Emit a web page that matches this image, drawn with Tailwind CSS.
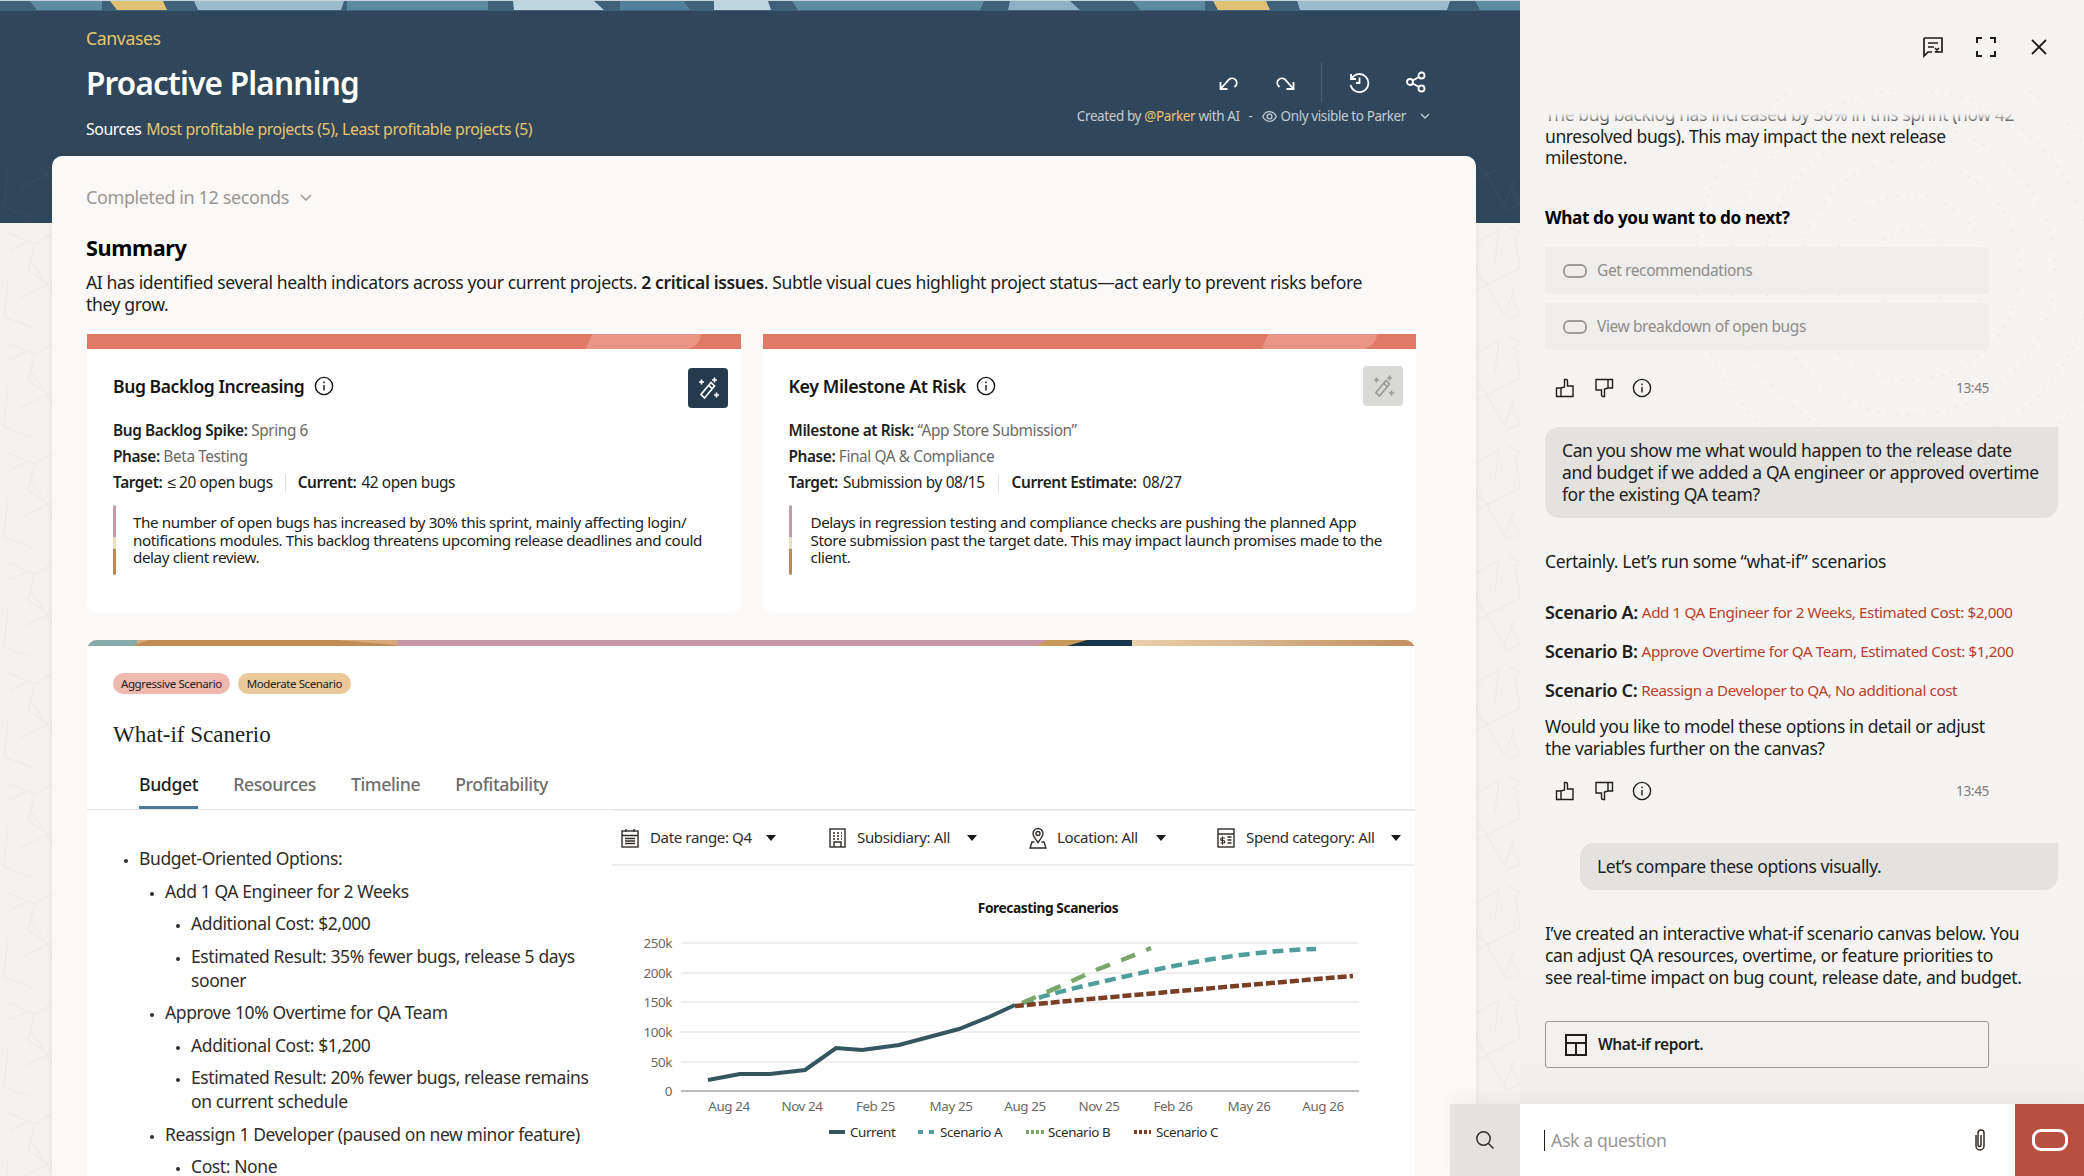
<!DOCTYPE html>
<html><head><meta charset="utf-8"><script src="https://cdn.jsdelivr.net/npm/@tailwindcss/browser@4"></script></head>
<body class="m-0">
<div class="relative flex w-[2084px] h-[1176px] overflow-hidden bg-[#f3f2ef] font-['Noto_Sans',sans-serif] tracking-[-0.4px] text-[#201e1c]">
<!-- LEFT -->
<div class="relative w-[1520px] shrink-0">
  <svg class="absolute left-0 top-0 pointer-events-none" width="1520" height="1176">
    <defs><pattern id="tex" width="120" height="110" patternUnits="userSpaceOnUse"><g stroke="#8a8a80" stroke-opacity=".07" stroke-width="1.300" fill="none"><path d="M5 12l30 12-7 26 20 14M35 24l24-14M59 10l-4 32M20 78l27-13 18 32M47 65l33-17 20 10M80 48l-5-32 27-9M100 58l-7 32-27 10M100 90l18 9M8 58l-4 39 27 10M68 6l40 20M94 38l20-12M30 40l14 20M74 70l-9 24M10 30l16-8M84 100l-12-20"/></g></pattern></defs>
    <rect x="0" y="170" width="1520" height="1006" fill="url(#tex)"/>
  </svg>
  <header class="h-[223px] bg-[#30475b] text-white">
    <svg class="block" width="1520" height="11" viewBox="0 0 1520 11">
      <rect width="1520" height="11" fill="#3f617a"/><rect width="1520" height="1" fill="#c7d3da"/>
      <polygon points="30,1 102,1 102,10 37,10" fill="#5f8ba4"/><polygon points="110,1 163,1 167,10 117,10" fill="#e0c072"/><polygon points="194,1 344,1 341,10 198,10" fill="#9bbccb"/><polygon points="347,1 488,1 488,10 347,10" fill="#5d8aa3"/><polygon points="513,1 594,1 604,10 514,10" fill="#bdd6e2"/><polygon points="620,1 684,1 690,10 620,10" fill="#527f9a"/><polygon points="714,1 768,1 771,10 714,10" fill="#bdd6e2"/><polygon points="792,1 984,1 980,10 798,10" fill="#5f8ca4"/><polygon points="1010,1 1070,1 1080,10 1008,10" fill="#8cb2c3"/><polygon points="1133,1 1205,1 1205,10 1140,10" fill="#5d8aa3"/><polygon points="1213,1 1266,1 1270,10 1218,10" fill="#e0c072"/><polygon points="1297,1 1450,1 1447,10 1300,10" fill="#9bbccb"/><polygon points="1475,1 1520,1 1520,10 1480,10" fill="#5f8ca4"/>
    </svg>
    <div class="flex justify-between pl-[86px] pr-[94px]">
      <div>
        <div class="mt-[16px] text-[17.700px] leading-[22px] text-[#e7c56f]">Canvases</div>
        <h1 class="mt-[13px] text-[31.500px] leading-[42px] tracking-[-0.8px] font-semibold text-white">Proactive Planning</h1>
        <p class="mt-[14px] text-[15.800px] leading-[22px]">Sources <span class="ml-[1px] text-[#e7c56f]">Most profitable projects (5), Least profitable projects (5)</span></p>
      </div>
      <div class="flex flex-col items-end">
        <div class="mt-[51px] flex items-center h-[40px] text-white">
          <svg class="mr-[36px]" width="22" height="22" viewBox="0 0 22 22" fill="none" stroke="currentColor" stroke-width="1.8"><path d="M3.5 11v7h7M3.500 18L12 8.500a4.600 4.600 0 0 1 6.500 6.500l-1 1"/></svg>
          <svg class="mr-[24px]" width="22" height="22" viewBox="0 0 22 22" fill="none" stroke="currentColor" stroke-width="1.8"><path d="M18.500 11v7h-7M18.500 18L10 8.500a4.600 4.600 0 0 0-6.500 6.500l1 1"/></svg>
          <div class="w-px h-[40px] bg-[#48606f] mr-[26px]"></div>
          <svg class="mr-[35px]" width="22" height="22" viewBox="0 0 22 22" fill="none" stroke="currentColor" stroke-width="1.8"><path d="M3 3v5h5M3.600 7.500A9 9 0 1 1 2.600 14M11.500 6.500V12H8"/></svg>
          <svg class="mr-[-1px]" width="22" height="22" viewBox="0 0 22 22" fill="none" stroke="currentColor" stroke-width="1.8"><circle cx="5" cy="11" r="3"/><circle cx="16.500" cy="4.500" r="3"/><circle cx="16.500" cy="17.500" r="3"/><path d="M7.700 9.500L14 6M7.700 12.500L14 16"/></svg>
        </div>
        <div class="mt-[4px] flex items-center h-[20px] text-[13.500px] text-[#c3ccd2] mr-[-5px]">
          <span>Created by <span class="text-[#e7c56f]">@Parker</span> with AI</span><span class="mx-[9px]">-</span>
          <svg class="mr-[4px]" width="15" height="15" viewBox="0 0 15 15" fill="none" stroke="currentColor" stroke-width="1.3"><path d="M.7 7.500C2.500 4 5 2.700 7.500 2.700S12.500 4 14.300 7.500c-1.800 3.500-4.300 4.800-6.800 4.800S2.500 11 .7 7.500z"/><circle cx="7.500" cy="7.500" r="2.400"/></svg>
          <span>Only visible to Parker</span>
          <svg class="ml-[13px]" width="12" height="12" viewBox="0 0 12 12" fill="none" stroke="currentColor" stroke-width="1.3"><path d="M2 4l4 4 4-4"/></svg>
        </div>
      </div>
    </div>
  </header>
  <main class="relative z-10 -mt-[67px] ml-[52px] w-[1424px] h-[1020px] bg-[#fbf9f7] rounded-t-[10px] shadow-[0_0_6px_rgba(0,0,0,0.08)] pl-[34px] pr-[60px] pt-[29px]">
    <div class="flex items-center h-[24px] text-[18px] text-[#9a9794]">Completed in 12 seconds
      <svg class="ml-[10px]" width="14" height="14" viewBox="0 0 14 14" fill="none" stroke="currentColor" stroke-width="1.5"><path d="M2 5l5 5 5-5"/></svg></div>
    <h2 class="mt-[24px] h-[30px] text-[21.700px] leading-[30px] font-bold text-black">Summary</h2>
    <p class="mt-[8px] text-[17.600px] leading-[22px] pr-[40px]">AI has identified several health indicators across your current projects. <b class="font-semibold">2 critical issues</b>. Subtle visual cues highlight project status—act early to prevent risks before they grow.</p>
    <div class="mt-[19px] grid grid-cols-2 gap-[22px] w-[1330px] pl-[1px]">
      <!-- card 1 -->
      <section class="h-[279px] bg-white rounded-b-[10px] overflow-hidden">
        <svg class="block" width="654" height="15"><rect width="654" height="15" fill="#e07a67"/><path d="M505 0H614Q614 10 602 15H499z" fill="#ea9585"/></svg>
        <div class="pl-[26px] pr-[13px]">
          <div class="flex justify-between items-start mt-[19px] h-[39px]">
            <div class="flex items-center h-[38px] text-[17.500px] font-semibold text-[#161513] mt-[-1px]">Bug Backlog Increasing
              <svg class="ml-[10px]" width="20" height="20" viewBox="0 0 20 20" fill="none" stroke="#161513" stroke-width="1.400"><circle cx="10" cy="10" r="8.600"/><path d="M10 9v5.500M10 5.400v1.800"/></svg></div>
            <div class="w-[40px] h-[40px] rounded-[4px] bg-[#253a4c] flex items-center justify-center text-white">
              <svg width="28" height="28" viewBox="0 0 28 28" fill="none" stroke="currentColor" stroke-width="1.700"><path d="M5 8h5M7.500 5.500v5M18 6h5M20.500 3.500v5M20 21h5M22.500 18.500v5"/><path d="M17 8.500l3.500 3.500L10.500 24 7 20.500zM14.500 11l3.500 3.500"/></svg></div>
          </div>
          <div class="mt-[11px] text-[15.400px] leading-[26px]">
            <div><b class="font-semibold">Bug Backlog Spike:</b> <span class="text-[#6b6966]">Spring 6</span></div>
            <div><b class="font-semibold">Phase:</b> <span class="text-[#6b6966]">Beta Testing</span></div>
            <div class="flex items-center"><b class="font-semibold">Target:</b><span class="ml-[5px]">≤ 20 open bugs</span><span class="w-px h-[18px] bg-[#e2e1de] mx-[12px]"></span><b class="font-semibold">Current:</b><span class="ml-[5px]">42 open bugs</span></div>
          </div>
          <div class="mt-[9px] flex h-[70px]">
            <div class="w-[3px] h-[70px] rounded-[2px] bg-[linear-gradient(#c79aa8_0%,#c79aa8_45%,#f0e0c0_46%,#f0e0c0_62%,#b88a56_63%,#b88a56_100%)]"></div>
            <p class="ml-[17px] mt-[9px] text-[15.200px] leading-[17.500px] w-[590px]">The number of open bugs has increased by 30% this sprint, mainly affecting login/ notifications modules. This backlog threatens upcoming release deadlines and could delay client review.</p>
          </div>
        </div>
      </section>
      <!-- card 2 -->
      <section class="h-[279px] bg-white rounded-b-[10px] overflow-hidden">
        <svg class="block" width="654" height="15"><rect width="654" height="15" fill="#e07a67"/><path d="M505 0H614Q614 10 602 15H499z" fill="#ea9585"/></svg>
        <div class="pl-[26px] pr-[13px]">
          <div class="flex justify-between items-start mt-[17px] h-[41px]">
            <div class="flex items-center h-[38px] text-[17.800px] font-semibold text-[#161513] mt-[1px]">Key Milestone At Risk
              <svg class="ml-[10px]" width="20" height="20" viewBox="0 0 20 20" fill="none" stroke="#161513" stroke-width="1.400"><circle cx="10" cy="10" r="8.600"/><path d="M10 9v5.500M10 5.400v1.800"/></svg></div>
            <div class="w-[40px] h-[40px] rounded-[4px] bg-[#d9d9d7] flex items-center justify-center text-[#9a9a98]">
              <svg width="28" height="28" viewBox="0 0 28 28" fill="none" stroke="currentColor" stroke-width="1.700"><path d="M5 8h5M7.500 5.500v5M18 6h5M20.500 3.500v5M20 21h5M22.500 18.500v5"/><path d="M17 8.500l3.500 3.500L10.500 24 7 20.500zM14.500 11l3.500 3.500"/></svg></div>
          </div>
          <div class="mt-[11px] text-[15.400px] leading-[26px]">
            <div><b class="font-semibold">Milestone at Risk:</b> <span class="text-[#6b6966]">“App Store Submission”</span></div>
            <div><b class="font-semibold">Phase:</b> <span class="text-[#6b6966]">Final QA &amp; Compliance</span></div>
            <div class="flex items-center"><b class="font-semibold">Target:</b><span class="ml-[5px]">Submission by 08/15</span><span class="w-px h-[18px] bg-[#e2e1de] mx-[13px]"></span><b class="font-semibold">Current Estimate:</b><span class="ml-[6px]">08/27</span></div>
          </div>
          <div class="mt-[9px] flex h-[70px]">
            <div class="w-[3px] h-[70px] rounded-[2px] bg-[linear-gradient(#c79aa8_0%,#c79aa8_45%,#f0e0c0_46%,#f0e0c0_62%,#b88a56_63%,#b88a56_100%)]"></div>
            <p class="ml-[19px] mt-[9px] text-[15.200px] leading-[17.500px] w-[590px]">Delays in regression testing and compliance checks are pushing the planned App<br>Store submission past the target date. This may impact launch promises made to the<br>client.</p>
          </div>
        </div>
      </section>
    </div>
    <!-- what-if card -->
    <section class="mt-[27px] w-[1328px] ml-[1px] h-[540px] bg-white rounded-t-[10px] overflow-hidden">
      <svg class="block" width="1328" height="6" viewBox="0 0 1328 6">
        <rect width="1328" height="6" fill="#d6a97a"/><rect x="0" width="50" height="6" fill="#86aba9"/><path d="M45 6L62 0H250L320 6z" fill="#c08c56"/><rect x="310" width="670" height="6" fill="#c796a7"/><path d="M960 0H1010L1000 6H950z" fill="#c89a58"/><path d="M980 6L1000 0H1045V6z" fill="#17364a"/>
        <defs><linearGradient id="sand"><stop offset="0" stop-color="#e9d0ad"/><stop offset="1" stop-color="#c08f5e"/></linearGradient></defs><rect x="1045" width="283" height="6" fill="url(#sand)"/>
      </svg>
      <div class="pl-[26px] mt-[27px] flex gap-[8px] text-[11.500px] leading-[21px] text-[#201e1c]">
        <span class="px-[8px] rounded-full bg-[#efb9b0]">Aggressive Scenario</span>
        <span class="px-[9px] rounded-full bg-[#ecc99a]">Moderate Scenario</span>
      </div>
      <h3 class="pl-[26px] mt-[24px] h-[34px] font-['Liberation_Serif',serif] tracking-normal text-[23px] leading-[34px]">What-if Scanerio</h3>
      <div class="h-[58px] pl-[52px] flex items-end gap-[35px] border-b border-[#e5e4e2] text-[17.700px]">
        <div class="h-[48px] pt-[11px] leading-[24px] border-b-[3px] border-[#4a7a96] text-[#201e1c] font-medium">Budget</div>
        <div class="h-[48px] pt-[11px] leading-[24px] text-[#6f6d6a] font-medium">Resources</div>
        <div class="h-[48px] pt-[11px] leading-[24px] text-[#6f6d6a] font-medium">Timeline</div>
        <div class="h-[48px] pt-[11px] leading-[24px] text-[#6f6d6a] font-medium">Profitability</div>
      </div>
      <div class="flex">
        <div class="w-[525px] shrink-0 pl-[52px] pr-[10px] pt-[36px] text-[17.500px] leading-[24px] text-[#312d2a]">
          <ul class="list-disc space-y-[8.500px] marker:text-[12px]">
            <li>Budget-Oriented Options:
              <ul class="list-disc pl-[26px] mt-[8.500px] space-y-[8.500px]">
                <li>Add 1 QA Engineer for 2 Weeks
                  <ul class="list-disc pl-[26px] mt-[8.500px] space-y-[8.500px]">
                    <li>Additional Cost: $2,000</li>
                    <li>Estimated Result: 35% fewer bugs, release 5 days sooner</li>
                  </ul></li>
                <li>Approve 10% Overtime for QA Team
                  <ul class="list-disc pl-[26px] mt-[8.500px] space-y-[8.500px]">
                    <li>Additional Cost: $1,200</li>
                    <li>Estimated Result: 20% fewer bugs, release remains on current schedule</li>
                  </ul></li>
                <li>Reassign 1 Developer (paused on new minor feature)
                  <ul class="list-disc pl-[26px] mt-[8.500px]">
                    <li>Cost: None</li>
                  </ul></li>
              </ul></li>
          </ul>
        </div>
        <div class="flex-1">
          <div class="h-[56px] border-b-2 border-t border-[#efeeec] flex items-center pl-[9px] text-[15.100px] text-[#312d2a]">
            <svg width="18" height="20" viewBox="0 0 18 20" fill="none" stroke="#312d2a" stroke-width="1.400"><rect x="1" y="3" width="16" height="16"/><path d="M1 7.500h16M5 1v3M13 1v3M4 10.500h10M4 13h10M4 15.500h10" /></svg>
            <span class="ml-[11px] w-[101px] whitespace-nowrap">Date range: Q4</span>
            <svg class="ml-[14px]" width="12" height="8" viewBox="0 0 12 8"><path d="M1 1h10L6 7z" fill="#1b1a18"/></svg>
            <svg class="ml-[52px]" width="17" height="20" viewBox="0 0 17 20" fill="none" stroke="#312d2a" stroke-width="1.400"><rect x="1" y="1" width="15" height="18"/><path d="M4 5h2M8 5h2M12 5h1M4 8h2M8 8h2M12 8h1M4 11h2M8 11h2M12 11h1M5 19v-5h7v5"/></svg>
            <span class="ml-[11px] w-[95px] whitespace-nowrap">Subsidiary: All</span>
            <svg class="ml-[14px]" width="12" height="8" viewBox="0 0 12 8"><path d="M1 1h10L6 7z" fill="#1b1a18"/></svg>
            <svg class="ml-[50px]" width="20" height="22" viewBox="0 0 20 22" fill="none" stroke="#312d2a" stroke-width="1.400"><path d="M10 15.500C7 11.500 5 9 5 6.500a5 5 0 0 1 10 0C15 9 13 11.500 10 15.500z"/><circle cx="10" cy="6.500" r="2"/><path d="M6.500 15H4L2 21h16l-2-6h-2.500"/></svg>
            <span class="ml-[9px] w-[84px] whitespace-nowrap">Location: All</span>
            <svg class="ml-[14px]" width="12" height="8" viewBox="0 0 12 8"><path d="M1 1h10L6 7z" fill="#1b1a18"/></svg>
            <svg class="ml-[50px]" width="18" height="20" viewBox="0 0 18 20" fill="none" stroke="#312d2a" stroke-width="1.400"><rect x="1" y="1" width="16" height="18"/><path d="M1 6h16M10.500 9h4M10.500 12h4M10.500 15h4"/><path d="M8 10H5a1 1 0 0 0 0 2.500h1.500a1 1 0 0 1 0 2.500H3.500M5.500 8.500v8" stroke-width="1.200"/></svg>
            <span class="ml-[11px] w-[130px] whitespace-nowrap">Spend category: All</span>
            <svg class="ml-[14px]" width="12" height="8" viewBox="0 0 12 8"><path d="M1 1h10L6 7z" fill="#1b1a18"/></svg>
          </div>
          <svg class="block" width="803" height="310" viewBox="612 866 803 310">
            <text x="1048" y="913" text-anchor="middle" font-size="13.700" font-weight="700" fill="#161513">Forecasting Scanerios</text>
            <g stroke="#ebeae8" stroke-width="1.500"><path d="M681 943H1359M681 973H1359M681 1002H1359M681 1032H1359M681 1062H1359"/></g>
            <path d="M681 1091H1359" stroke="#7d7b78" stroke-width="1.200"/>
            <g font-size="13.400" fill="#6b6966" text-anchor="end"><text x="672" y="948">250k</text><text x="672" y="978">200k</text><text x="672" y="1007">150k</text><text x="672" y="1037">100k</text><text x="672" y="1067">50k</text><text x="672" y="1096">0</text></g>
            <g font-size="13.400" fill="#6b6966" text-anchor="middle"><text x="729" y="1111">Aug 24</text><text x="802" y="1111">Nov 24</text><text x="875.500" y="1111">Feb 25</text><text x="951" y="1111">May 25</text><text x="1025" y="1111">Aug 25</text><text x="1099" y="1111">Nov 25</text><text x="1173" y="1111">Feb 26</text><text x="1249" y="1111">May 26</text><text x="1323" y="1111">Aug 26</text></g>
            <path d="M708 1080L740 1074H770L805 1070L836 1048L862 1050L899 1045L929 1037L959 1029L989 1017L1015 1005" fill="none" stroke="#34565f" stroke-width="4"/>
            <path d="M1023 1003C1050 993 1100 982 1159 969C1210 958 1270 950 1316 949" fill="none" stroke="#4f9e9c" stroke-width="4.500" stroke-dasharray="11 6"/>
            <path d="M1022 1003L1070 982L1096 970L1122 960L1151 948" fill="none" stroke="#7ba86a" stroke-width="4.500" stroke-dasharray="15 12"/>
            <path d="M1015 1006C1100 998 1200 989 1353 976" fill="none" stroke="#7b3f24" stroke-width="4.500" stroke-dasharray="9 3"/>
            <g font-size="13.400" fill="#312d2a"><text x="850" y="1137">Current</text><text x="940" y="1137">Scenario A</text><text x="1048" y="1137">Scenario B</text><text x="1156" y="1137">Scenario C</text></g>
            <path d="M829 1132H845" stroke="#34565f" stroke-width="4"/><path d="M918 1132H935" stroke="#4f9e9c" stroke-width="4" stroke-dasharray="5 6"/><path d="M1026 1132H1044" stroke="#7ba86a" stroke-width="4" stroke-dasharray="3 2"/><path d="M1134 1132H1151" stroke="#7b3f24" stroke-width="4" stroke-dasharray="3 2"/>
          </svg>
        </div>
      </div>
    </section>
  </main>
</div>
<!-- RIGHT -->
<aside class="relative z-20 w-[564px] shrink-0 flex flex-col bg-[linear-gradient(#f5f4f2_0%,#f5f4f2_80%,#efece8_100%)]">
  <svg class="absolute left-0 top-[90px] pointer-events-none" width="564" height="450" fill="none" stroke="#ebeae8" stroke-width="2.200" stroke-linecap="round" stroke-dasharray="0 10">
    <circle cx="390" cy="180" r="40"/><circle cx="390" cy="180" r="75"/><circle cx="390" cy="180" r="110"/><circle cx="390" cy="180" r="145"/><circle cx="390" cy="180" r="180"/><circle cx="390" cy="180" r="215"/>
  </svg>
  <div class="relative h-[113px] shrink-0 flex justify-end items-start pt-[36px] pr-[34px] gap-[31px] text-[#201e1c]">
    <svg width="22" height="22" viewBox="0 0 22 22" fill="none" stroke="currentColor" stroke-width="1.700"><path d="M2 2h18v14h-7M2 2v18l4-4h4M6 7h10M6 11h6M13 12l4 4M17 12l-4 4" /></svg>
    <svg width="22" height="22" viewBox="0 0 22 22" fill="none" stroke="currentColor" stroke-width="2"><path d="M2 7V2h5M15 2h5v5M2 15v5h5M15 20h5v-5"/></svg>
    <svg width="22" height="22" viewBox="0 0 22 22" fill="none" stroke="currentColor" stroke-width="1.800"><path d="M4 4l14 14M18 4L4 18"/></svg>
  </div>
  <div class="relative flex-1 overflow-hidden pl-[25px] pr-[26px] text-[17.500px] leading-[21.700px]">
    <div class="-mt-[9px]">
      <p>The bug backlog has increased by 30% in this sprint (now 42<br>unresolved bugs). This may impact the next release<br>milestone.</p>
      <h4 class="mt-[37px] text-[17.200px] leading-[24px] font-bold text-black">What do you want to do next?</h4>
      <div class="mt-[17px] w-[444px] h-[47px] bg-[#efeeec] rounded-[2px] flex items-center pl-[18px] text-[15.500px] text-[#8f8d8a]"><span class="w-[24px] h-[14px] rounded-[6px] border-[2.500px] border-[#a09e9b]"></span><span class="ml-[10px]">Get recommendations</span></div>
      <div class="mt-[9px] w-[444px] h-[47px] bg-[#efeeec] rounded-[2px] flex items-center pl-[18px] text-[15.500px] text-[#8f8d8a]"><span class="w-[24px] h-[14px] rounded-[6px] border-[2.500px] border-[#a09e9b]"></span><span class="ml-[10px]">View breakdown of open bugs</span></div>
      <div class="mt-[26px] w-[444px] h-[24px] flex items-center pl-[10px] text-[#201e1c]">
        <svg width="20" height="20" viewBox="0 0 20 20" fill="none" stroke="currentColor" stroke-width="1.400"><path d="M1.500 10h4.500v8.500H1.500zM6 10l3.500-1V1.500h1.500c1 0 1.500 1 1.500 2V8h5.500L18 18.500H6"/></svg>
        <svg class="ml-[19px]" width="20" height="20" viewBox="0 0 20 20" fill="none" stroke="currentColor" stroke-width="1.400"><path d="M18.500 10h-4.500V1.500h4.500zM14 10l-3.500 1v7.500H9c-1 0-1.500-1-1.500-2V12H2L2 1.500h12"/></svg>
        <svg class="ml-[18px]" width="20" height="20" viewBox="0 0 20 20" fill="none" stroke="currentColor" stroke-width="1.400"><circle cx="10" cy="10" r="8.600"/><path d="M10 9v5.500M10 5.400v1.800"/></svg>
        <span class="ml-auto text-[13.700px] text-[#7f7d7a]">13:45</span>
      </div>
      <div class="mt-[27px] h-[91px] py-[13px] px-[17px] bg-[#e3e2df] rounded-[14px] rounded-tr-none">Can you show me what would happen to the release date<br>and budget if we added a QA engineer or approved overtime<br>for the existing QA team?</div>
      <p class="mt-[33px]">Certainly. Let’s run some “what-if” scenarios</p>
      <p class="mt-[27px] leading-[24px] flex items-center"><b class="font-semibold text-[18px]">Scenario A:</b><span class="ml-[4px] text-[15.200px] text-[#b8402e]">Add 1 QA Engineer for 2 Weeks, Estimated Cost: $2,000</span></p>
      <p class="mt-[15px] leading-[24px] flex items-center"><b class="font-semibold text-[18px]">Scenario B:</b><span class="ml-[4px] text-[15.200px] text-[#b8402e]">Approve Overtime for QA Team, Estimated Cost: $1,200</span></p>
      <p class="mt-[15px] leading-[24px] flex items-center"><b class="font-semibold text-[18px]">Scenario C:</b><span class="ml-[4px] text-[15.200px] text-[#b8402e]">Reassign a Developer to QA, No additional cost</span></p>
      <p class="mt-[14px] w-[450px]">Would you like to model these options in detail or adjust the variables further on the canvas?</p>
      <div class="mt-[20px] w-[444px] h-[24px] flex items-center pl-[10px] text-[#201e1c]">
        <svg width="20" height="20" viewBox="0 0 20 20" fill="none" stroke="currentColor" stroke-width="1.400"><path d="M1.500 10h4.500v8.500H1.500zM6 10l3.500-1V1.500h1.500c1 0 1.500 1 1.500 2V8h5.500L18 18.500H6"/></svg>
        <svg class="ml-[19px]" width="20" height="20" viewBox="0 0 20 20" fill="none" stroke="currentColor" stroke-width="1.400"><path d="M18.500 10h-4.500V1.500h4.500zM14 10l-3.500 1v7.500H9c-1 0-1.500-1-1.500-2V12H2L2 1.500h12"/></svg>
        <svg class="ml-[18px]" width="20" height="20" viewBox="0 0 20 20" fill="none" stroke="currentColor" stroke-width="1.400"><circle cx="10" cy="10" r="8.600"/><path d="M10 9v5.500M10 5.400v1.800"/></svg>
        <span class="ml-auto text-[13.700px] text-[#7f7d7a]">13:45</span>
      </div>
      <div class="mt-[40px] ml-[35px] h-[47px] flex items-center px-[17px] bg-[#e3e2df] rounded-[14px] rounded-tr-none">Let’s compare these options visually.</div>
      <p class="mt-[33px] w-[490px]">I’ve created an interactive what-if scenario canvas below. You can adjust QA resources, overtime, or feature priorities to<br>see real-time impact on bug count, release date, and budget.</p>
      <div class="mt-[33px] w-[444px] h-[47px] border border-[#9b9996] rounded-[3px] flex items-center pl-[19px] text-[15.500px] font-semibold">
        <svg width="22" height="22" viewBox="0 0 22 22" fill="none" stroke="#201e1c" stroke-width="2"><rect x="1" y="1" width="20" height="20"/><path d="M1 9h20M11 9v12"/></svg>
        <span class="ml-[11px]">What-if report.</span>
      </div>
    </div>
    <div class="absolute left-0 right-0 top-0 h-[12px] bg-[linear-gradient(#f5f4f2,rgba(245,244,242,0))]"></div>
  </div>
  <div class="relative h-[72px] shrink-0 flex -ml-[70px] shadow-[0_-8px_14px_rgba(0,0,0,0.03)]">
    <div class="w-[70px] bg-[#e3e2df] flex items-center justify-center text-[#312d2a]">
      <svg width="20" height="20" viewBox="0 0 20 20" fill="none" stroke="currentColor" stroke-width="1.500"><circle cx="8.500" cy="8.500" r="6.700"/><path d="M13.500 13.500l5 5"/></svg></div>
    <div class="flex-1 bg-white flex items-center pl-[24px] text-[17.700px] text-[#9a9794]">
      <span class="w-px h-[21px] bg-[#201e1c] mr-[6px]"></span><span>Ask a question</span>
      <svg class="ml-auto mr-[25px]" width="20" height="24" viewBox="0 0 20 24" fill="none" stroke="#312d2a" stroke-width="1.500"><path d="M6 7v11a4 4 0 0 0 8 0V5a3 3 0 0 0-6 0v12a1.500 1.500 0 0 0 3 0V7"/></svg>
    </div>
    <div class="w-[69px] bg-[#b85040] flex items-center justify-center"><span class="w-[36px] h-[22px] rounded-[9px] border-[3.500px] border-white"></span></div>
  </div>
</aside>
</div>
</body></html>
